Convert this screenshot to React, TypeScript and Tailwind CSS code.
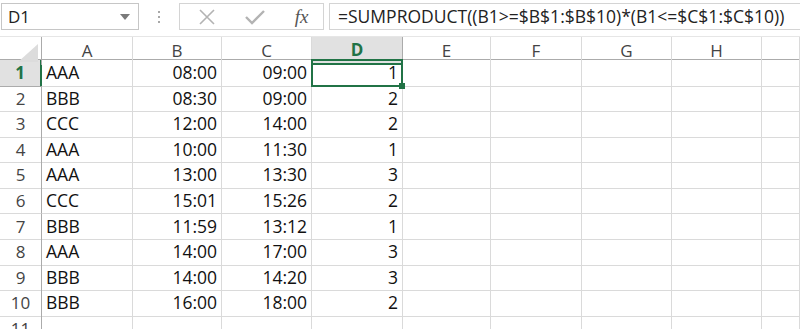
import React from 'react';

const cols = ['A', 'B', 'C', 'D', 'E', 'F', 'G', 'H', ''];

const rows: [string, string, string, string][] = [
  ['AAA', '08:00', '09:00', '1'],
  ['BBB', '08:30', '09:00', '2'],
  ['CCC', '12:00', '14:00', '2'],
  ['AAA', '10:00', '11:30', '1'],
  ['AAA', '13:00', '13:30', '3'],
  ['CCC', '15:01', '15:26', '2'],
  ['BBB', '11:59', '13:12', '1'],
  ['AAA', '14:00', '17:00', '3'],
  ['BBB', '14:00', '14:20', '3'],
  ['BBB', '16:00', '18:00', '2'],
];

const grid = 'grid grid-cols-[42px_91px_89px_90px_91px_88px_91px_90px_90px_1fr]';

const FormulaBar = () => (
  <div className="flex items-start h-[37px] pt-[3px] pl-[1px] border-b border-[#e6e6e6]">
    <div className="w-[138px] h-[27px] border border-[#c6c6c6] flex items-center justify-between pl-[6px] pr-[8px]">
      <span className="text-[17px] text-[#222]">D1</span>
      <svg width="10" height="6" viewBox="0 0 10 6">
        <path d="M0 0 L10 0 L5 6 Z" fill="#7a7a7a" />
      </svg>
    </div>
    <div className="w-[40px] h-[27px] flex items-center justify-center">
      <svg width="4" height="14" viewBox="0 0 4 14">
        <rect x="1" y="1" width="2" height="2" fill="#a8a8a8" />
        <rect x="1" y="6" width="2" height="2" fill="#a8a8a8" />
        <rect x="1" y="11" width="2" height="2" fill="#a8a8a8" />
      </svg>
    </div>
    <div className="w-[145px] h-[27px] border border-[#d4d4d4] flex items-center">
      <div className="w-[48px] flex justify-center pl-[6px]">
        <svg width="16" height="16" viewBox="0 0 16 16">
          <path d="M1 1 L15 15 M15 1 L1 15" stroke="#b3b3b3" strokeWidth="1.6" fill="none" />
        </svg>
      </div>
      <div className="w-[48px] flex justify-center pl-[6px]">
        <svg width="20" height="16" viewBox="0 0 20 16">
          <path d="M1 8 L7 14 L19 2" stroke="#b3b3b3" strokeWidth="2.4" fill="none" />
        </svg>
      </div>
      <div className="flex-1 flex justify-center pl-[4px]">
        <span className="text-[19px] italic text-[#555] leading-none" style={{ fontFamily: '"Liberation Serif", serif' }}>
          fx
        </span>
      </div>
    </div>
    <div className="flex-1 h-[27px] ml-[5px] border border-r-0 border-[#d4d4d4] flex items-center pl-[8px]">
      <span className="text-[17.5px] text-[#222] whitespace-nowrap">=SUMPRODUCT((B1&gt;=$B$1:$B$10)*(B1&lt;=$C$1:$C$10))</span>
    </div>
  </div>
);

const HeaderRow = () => (
  <div className={`${grid} h-[23px] border-b border-[#ababab]`}>
    <div className="relative border-r border-[#ababab] overflow-hidden">
      <svg className="absolute right-[3px] bottom-[3px]" width="20" height="18" viewBox="0 0 20 18">
        <path d="M20 0 L20 18 L0 18 Z" fill="#dcdcdc" />
      </svg>
    </div>
    {cols.map((c, i) =>
      c === 'D' ? (
        <div key={i} className="bg-[#e1e1e1] border-r border-[#ababab] border-b-2 border-b-[#217346] flex items-center justify-center">
          <span className="text-[17px] font-bold text-[#217346]">D</span>
        </div>
      ) : (
        <div key={i} className="border-r border-[#dadada] flex items-center justify-center">
          <span className="text-[17px] text-[#444]">{c}</span>
        </div>
      )
    )}
  </div>
);

const DataRow = ({ n, data }: { n: number; data?: [string, string, string, string] }) => {
  const selected = n === 1;
  return (
    <div className={`${grid} h-[25.6px]`}>
      <div
        className={`flex items-center justify-center border-b border-r ${
          selected ? 'bg-[#e1e1e1] border-b-[#ababab] border-r-2 border-r-[#217346]' : 'border-b-[#dadada] border-r-[#ababab]'
        }`}
      >
        <span className={`text-[17px] ${selected ? 'text-[#217346] font-bold' : 'text-[#444]'}`}>{n}</span>
      </div>
      {cols.map((_, i) => {
        const v = data && i < 4 ? data[i] : '';
        return (
          <div
            key={i}
            className={`relative flex items-center border-b border-r border-[#dadada] px-[4px] ${
              i === 0 ? 'justify-start' : 'justify-end'
            }`}
          >
            <span className="text-[17.5px] text-[#111] leading-none">{v}</span>
            {selected && i === 3 && (
              <>
                <div className="absolute z-10 -left-[1px] -top-[1px] -right-[1px] -bottom-[1px] border-2 border-[#217346] pointer-events-none" />
                <div className="absolute z-10 -right-[3px] -bottom-[3px] w-[6px] h-[6px] bg-[#217346]" />
              </>
            )}
          </div>
        );
      })}
    </div>
  );
};

export default function App() {
  return (
    <div
      className="w-[800px] h-[329px] overflow-hidden bg-white"
      style={{ fontFamily: '"Open Sans", "Noto Sans", sans-serif' }}
    >
      <FormulaBar />
      <HeaderRow />
      {rows.map((r, i) => (
        <DataRow key={i} n={i + 1} data={r} />
      ))}
      <DataRow n={11} />
    </div>
  );
}
